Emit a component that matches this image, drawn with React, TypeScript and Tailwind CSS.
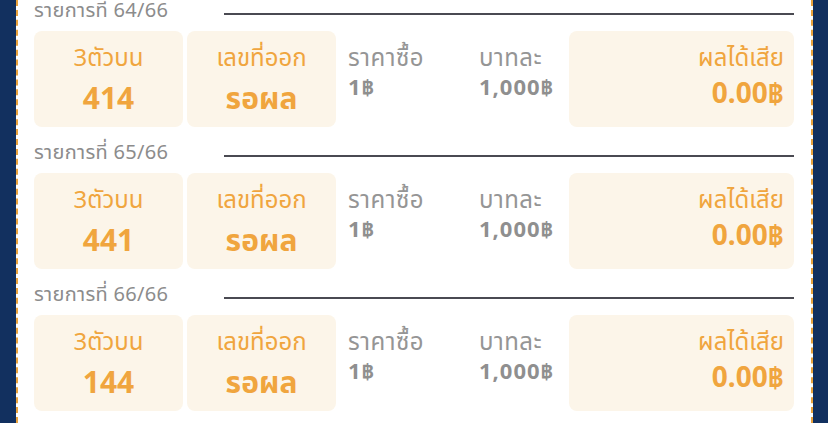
const items = [
  { no: 64, number: '414' },
  { no: 65, number: '441' },
  { no: 66, number: '144' },
];

function Row({ no, number }: { no: number; number: string }) {
  return (
    <div>
      {/* label + rule */}
      <div className="flex h-[46px] items-center">
        <span className="mt-[4px] w-[190px] shrink-0 text-[20px] leading-none tracking-[0.3px] text-[#8c8c8c]">รายการที่ {no}/66</span>
        <div className="mt-[11px] h-[2px] flex-1 bg-[#4a4a52]" />
      </div>

      {/* cards */}
      <div className="flex h-[96px]">
        <div className="flex w-[149px] flex-col items-center rounded-lg bg-[#fcf5e9] pt-[11px]">
          <span className="text-[24px] leading-[30px] text-[#f0a53e]">3ตัวบน</span>
          <span className="mt-[7px] text-[30px] font-bold leading-[38px] text-[#f0a53e]">{number}</span>
        </div>
        <div className="ml-[4px] flex w-[149px] flex-col items-center rounded-lg bg-[#fcf5e9] pt-[11px]">
          <span className="text-[24px] leading-[30px] text-[#f0a53e]">เลขที่ออก</span>
          <span className="mt-[7px] text-[30px] font-bold leading-[38px] text-[#f0a53e]">รอผล</span>
        </div>
        <div className="ml-[12px] flex w-[131px] flex-col pt-[11px]">
          <span className="text-[24px] leading-[30px] tracking-[0.5px] text-[#959595]">ราคาซื้อ</span>
          <span className="text-[22px] font-bold leading-[28px] tracking-[1px] text-[#8f8f8f]">1฿</span>
        </div>
        <div className="flex w-[90px] flex-col pt-[11px]">
          <span className="text-[24px] leading-[30px] tracking-[0.5px] text-[#959595]">บาทละ</span>
          <span className="text-[22px] font-bold leading-[28px] tracking-[1px] text-[#8f8f8f]">1,000฿</span>
        </div>
        <div className="flex flex-1 flex-col items-end rounded-lg bg-[#fcf5e9] pr-[10px] pt-[11px]">
          <span className="text-[24px] leading-[30px] text-[#f0a53e]">ผลได้เสีย</span>
          <span className="mt-[2px] text-[28px] font-bold leading-[36px] text-[#f0a53e]">0.00฿</span>
        </div>
      </div>
    </div>
  );
}

export default function App() {
  return (
    <div
      className="flex h-[423px] w-[828px] overflow-hidden bg-[#12305f]"
      style={{ fontFamily: '"Noto Sans", "Noto Sans Thai", sans-serif' }}
    >
      <div className="ml-[16px] mr-[15px] flex-1 overflow-hidden border-x-2 border-dashed border-[#eaa23c] bg-white pl-[16px] pr-[17px]">
        <div className="mt-[-15px]">
          {items.map((it) => (
            <Row key={it.no} {...it} />
          ))}
        </div>
      </div>
    </div>
  );
}
